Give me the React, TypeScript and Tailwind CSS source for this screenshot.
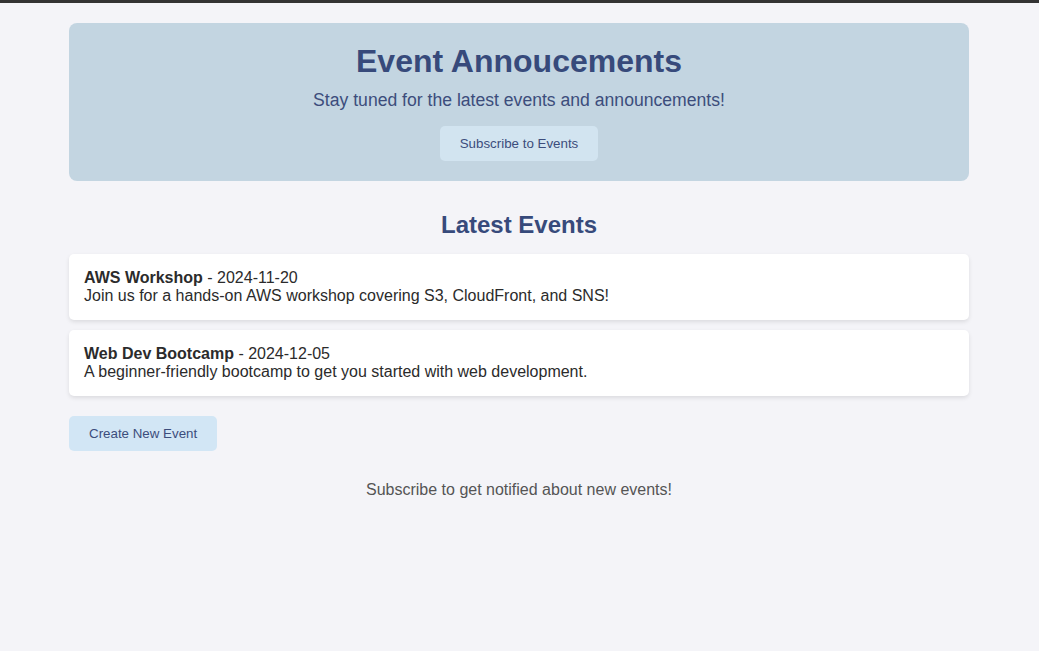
export default function App() {
  const events = [
    { title: "AWS Workshop", date: "2024-11-20", desc: "Join us for a hands-on AWS workshop covering S3, CloudFront, and SNS!" },
    { title: "Web Dev Bootcamp", date: "2024-12-05", desc: "A beginner-friendly bootcamp to get you started with web development." },
  ];

  return (
    <div className="min-h-[651px] bg-[#f4f4f8] font-['Liberation_Sans',Arial,sans-serif] border-t-[3px] border-[#333333]">
      <div className="w-[900px] ml-[69px] pt-[20px]">
        <header className="bg-[#c3d5e1] rounded-lg px-5 pt-5 pb-5 flex flex-col items-center">
          <h1 className="text-[32px] leading-[37px] font-bold text-[#374a7b]">Event Annoucements</h1>
          <p className="mt-[10px] text-[17.6px] leading-[20px] text-[#3c4d7c]">Stay tuned for the latest events and announcements!</p>
          <button className="mt-[16px] h-[35px] px-5 rounded-[5px] bg-[#d2e4f0] text-[13.333px] text-[#3c4d7c]">Subscribe to Events</button>
        </header>

        <h2 className="mt-[30px] text-center text-[24px] leading-[28px] font-bold text-[#374a7b]">Latest Events</h2>

        <div className="mt-[15px] flex flex-col gap-[10px]">
          {events.map((e) => (
            <div key={e.title} className="bg-white rounded-[5px] p-[15px] shadow-[0_2px_4px_rgba(0,0,0,0.1)] text-[16px] leading-[18px] text-[#2b2b2b]">
              <div><span className="font-bold">{e.title}</span> - {e.date}</div>
              <div>{e.desc}</div>
            </div>
          ))}
        </div>

        <button className="mt-[20px] h-[35px] px-5 rounded-[5px] bg-[#d2e6f5] text-[13.333px] text-[#3c4d7c]">Create New Event</button>

        <p className="mt-[30px] text-center text-[16px] leading-[18px] text-[#555555]">Subscribe to get notified about new events!</p>
      </div>
    </div>
  );
}
